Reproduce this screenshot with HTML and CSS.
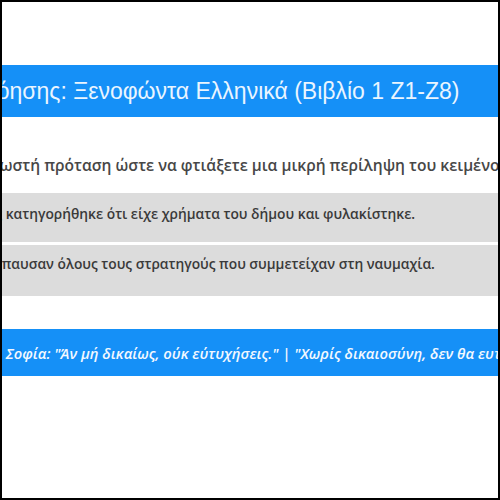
FILE: index.html
```html
<!DOCTYPE html>
<html lang="el">
<head>
<meta charset="utf-8">
<title>Ασκήσεις Κατανόησης</title>
<link rel="stylesheet" href="styles.css">
</head>
<body>
<div class="frame">
  <div class="title-bar">
    <h1 class="title">Ασκήσεις Κατανόησης: Ξενοφώντα Ελληνικά (Βιβλίο 1 Ζ1-Ζ8)</h1>
  </div>
  <p class="instruction">Επιλέξτε τη σωστή πρόταση ώστε να φτιάξετε μια μικρή περίληψη του κειμένου.</p>
  <div class="options">
    <div class="option"><span class="opt-text opt-1">Ο Ερασινίδης κατηγορήθηκε ότι είχε χρήματα του δήμου και φυλακίστηκε.</span></div>
    <div class="option"><span class="opt-text opt-2">Οι Αθηναίοι έπαυσαν όλους τους στρατηγούς που συμμετείχαν στη ναυμαχία.</span></div>
  </div>
  <div class="quote-bar">
    <p class="quote">Αρχαία Ελληνική Σοφία: "Άν μή δικαίως, ούκ εύτυχήσεις." | "Χωρίς δικαιοσύνη, δεν θα ευτυχήσεις."</p>
  </div>
</div>
</body>
</html>
```

FILE: styles.css
```css
html, body {
  margin: 0;
  padding: 0;
  background: #ffffff;
}

.frame {
  box-sizing: border-box;
  width: 500px;
  height: 500px;
  border: 2px solid #000;
  overflow: hidden;
  background: #ffffff;
  padding-top: 63px;
}

.title-bar {
  height: 52px;
  background: #1590f7;
  display: flex;
  align-items: center;
  overflow: hidden;
  white-space: nowrap;
}

.title {
  margin: 0 0 0 -168px;
  font-family: "Liberation Sans", Arial, sans-serif;
  font-weight: normal;
  font-size: 23px;
  color: #eaf5ff;
}

.instruction {
  margin: 38px 0 0 -104px;
  white-space: nowrap;
  font-family: "Open Sans", "DejaVu Sans", sans-serif;
  font-weight: 600;
  font-size: 15.6px;
  color: #474747;
  line-height: 20px;
}

.options {
  margin-top: 18px;
  display: flex;
  flex-direction: column;
  gap: 3px;
}

.option {
  background: #dcdcdc;
  height: 49px;
  box-sizing: border-box;
  padding-top: 12px;
  white-space: nowrap;
  overflow: hidden;
}

.option + .option {
  height: 51px;
  padding-top: 10px;
}

.opt-text {
  display: inline-block;
  font-family: "Open Sans", "DejaVu Sans", sans-serif;
  font-weight: 600;
  font-size: 13.8px;
  line-height: 16px;
  color: #3a3a3a;
}

.opt-1 { margin-left: -90px; }
.opt-2 { margin-left: -92px; }

.quote-bar {
  margin-top: 33px;
  height: 47px;
  background: #1590f7;
  display: flex;
  align-items: center;
  white-space: nowrap;
  overflow: hidden;
}

.quote {
  margin: 0 0 0 -113px;
  font-family: "Open Sans", "DejaVu Sans", sans-serif;
  font-style: italic;
  font-weight: 600;
  font-size: 14.8px;
  color: #f2f8ff;
}
```
